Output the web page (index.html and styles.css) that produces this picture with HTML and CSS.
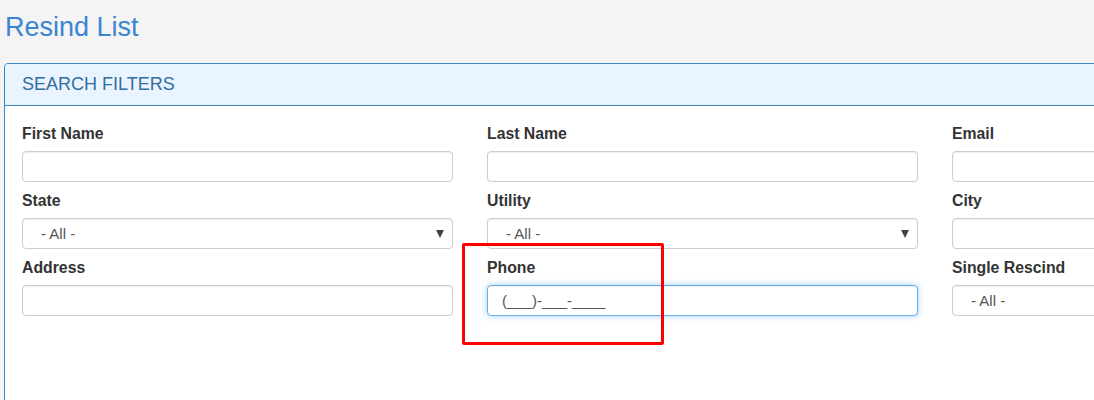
FILE: index.html
```html
<!DOCTYPE html>
<html>
<head>
    <title>Resind List</title>
    <link rel="stylesheet" href="styles.css">
</head>
<body>
<h1 class="page-title">Resind List</h1>

<div class="panel">
    <div class="panel-heading">SEARCH FILTERS</div>
    <div class="panel-body">
        <div class="filter-grid">
            <div class="field">
                <label>First Name</label>
                <input type="text" class="form-control">
            </div>
            <div class="field">
                <label>Last Name</label>
                <input type="text" class="form-control">
            </div>
            <div class="field">
                <label>Email</label>
                <input type="text" class="form-control">
            </div>

            <div class="field">
                <label>State</label>
                <div class="select-wrap">
                    <select class="form-control"><option>- All -</option></select>
                </div>
            </div>
            <div class="field">
                <label>Utility</label>
                <div class="select-wrap">
                    <select class="form-control"><option>- All -</option></select>
                </div>
            </div>
            <div class="field">
                <label>City</label>
                <input type="text" class="form-control">
            </div>

            <div class="field">
                <label>Address</label>
                <input type="text" class="form-control">
            </div>
            <div class="field">
                <label>Phone</label>
                <input type="text" class="form-control focused" value="(___)-___-____">
            </div>
            <div class="field">
                <label>Single Rescind</label>
                <div class="select-wrap">
                    <select class="form-control"><option>- All -</option></select>
                </div>
            </div>
        </div>
    </div>
</div>

<!-- annotation box drawn over the phone field -->
<div class="highlight-box"></div>
</body>
</html>
```

FILE: styles.css
```css
html, body {
    overflow: hidden;
}
body {
    margin: 0;
    position: relative;
    background-color: #F4F4F4;
    font-family: "Liberation Sans", Arial, sans-serif;
    color: #333333;
}
.page-title {
    margin: 12px 0 21px 5px;
    font-size: 27px;
    line-height: 30px;
    font-weight: normal;
    color: #3A85D2;
}
/* Search panel */
.panel {
    margin-left: 4px;
    width: 1200px;
    border: 1px solid #3F86BF;
    border-radius: 4px 0 0 0;
    background-color: #FFFFFF;
}
.panel-heading {
    height: 41px;
    line-height: 41px;
    padding-left: 17px;
    background-color: #EAF4FE;
    border-bottom: 1px solid #3F86BF;
    border-radius: 4px 0 0 0;
    font-size: 18px;
    color: #2F6FA3;
}
.panel-body {
    padding: 18px 17px 0;
    min-height: 300px;
}
.filter-grid {
    display: grid;
    grid-template-columns: repeat(3, 431px);
    column-gap: 34px;
}
.field {
    margin-bottom: 9px;
}
.field label {
    display: block;
    margin-bottom: 7px;
    font-size: 15.8px;
    line-height: 20px;
    font-weight: bold;
    color: #333333;
}
.form-control {
    display: block;
    box-sizing: border-box;
    width: 100%;
    height: 31px;
    padding: 0 14px;
    border: 1px solid #CCCCCC;
    border-radius: 4px;
    background-color: #FFFFFF;
    box-shadow: inset 0 1px 1px rgba(0, 0, 0, 0.075);
    font-family: "Liberation Sans", Arial, sans-serif;
    font-size: 15px;
    color: #555555;
    outline: none;
}
.form-control.focused {
    border-color: #66AFE9;
    box-shadow: inset 0 1px 1px rgba(0, 0, 0, 0.075), 0 0 6px rgba(102, 175, 233, 0.6);
}
.select-wrap {
    position: relative;
}
.select-wrap select {
    -webkit-appearance: none;
    appearance: none;
    padding-left: 18px;
}
.select-wrap::after {
    content: "";
    position: absolute;
    right: 9px;
    top: 12px;
    border-left: 4px solid transparent;
    border-right: 4px solid transparent;
    border-top: 8px solid #444444;
    pointer-events: none;
}
.highlight-box {
    position: absolute;
    left: 462px;
    top: 243px;
    width: 196px;
    height: 96px;
    border: 3.5px solid #FF0000;
    border-radius: 2px;
}
```
